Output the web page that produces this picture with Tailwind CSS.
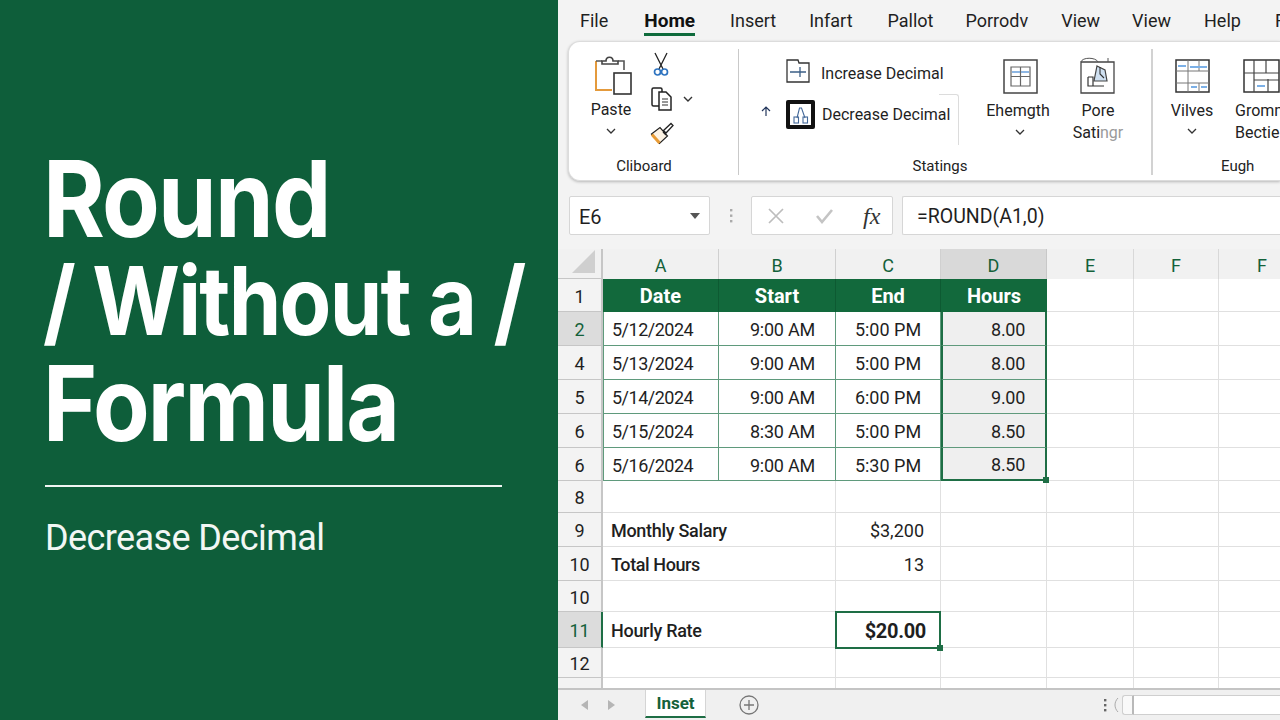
<!DOCTYPE html>
<html>
<head>
<meta charset="utf-8">
<script src="https://cdn.jsdelivr.net/npm/@tailwindcss/browser@4"></script>
</head>
<body class="m-0">
<div class="flex w-[1280px] h-[720px] overflow-hidden font-['Roboto',sans-serif]">
  <!-- left panel -->
  <div class="w-[558px] h-full shrink-0 bg-[#0e5e3a] text-white pl-[45px] pt-[148px]">
    <h1 class="-ml-[2px] font-['Inter',sans-serif] font-bold leading-[102px] tracking-[-2px] whitespace-nowrap origin-left scale-x-[0.89]">
      <span class="block text-[106px]">Round</span>
      <span class="block text-[95px]">/ Without a /</span>
      <span class="block text-[104px]">Formula</span>
    </h1>
    <div class="w-[457px] h-[2px] bg-[#f0f5f2] mt-[31px]"></div>
    <div class="mt-[29px] text-[36px] leading-[44px] tracking-[-0.6px] text-[#f2f7f4]">Decrease Decimal</div>
  </div>

  <!-- right panel -->
  <div class="flex-1 min-w-0 h-full bg-[#f3f3f3] flex flex-col text-[#1f1f1f]">
    <!-- tabs -->
    <div class="h-[41px] shrink-0 flex items-start pl-[22px] text-[18px] leading-[41px] whitespace-nowrap">
      <span>File</span>
      <span class="relative ml-[36px] font-bold text-[19px] text-[#111]">Home<span class="absolute left-0 right-0 top-[33px] h-[3px] bg-[#0f6b3c]"></span></span>
      <span class="ml-[35px]">Insert</span><span class="ml-[33px]">Infart</span><span class="ml-[35px]">Pallot</span><span class="ml-[32px]">Porrodv</span><span class="ml-[33px]">View</span><span class="ml-[32px]">View</span><span class="ml-[33px]">Help</span><span class="ml-[34px]">File</span>
    </div>

    <!-- ribbon -->
    <div class="ml-[10px] h-[140px] shrink-0 bg-white rounded-l-xl border border-r-0 border-[#dcdcdc] shadow-[0_1px_3px_rgba(0,0,0,0.25)] flex text-[16px] leading-[22px] whitespace-nowrap overflow-hidden">
      <!-- clipboard -->
      <div class="w-[169px] shrink-0 flex flex-col pt-[12px]">
        <div class="flex h-[105px]">
          <div class="w-[84px] flex flex-col items-center">
            <svg width="40" height="42" viewBox="0 0 40 42" fill="none" class="ml-[6px]">
              <path d="M2 7V36H18" stroke="#e49a3c" stroke-width="2"/>
              <path d="M2 7H8M24 7H30V16" stroke="#555" stroke-width="1.6"/>
              <path d="M8 10V7H12C12 2 19 2 19 7H24V10Z" fill="#fff" stroke="#444" stroke-width="1.6"/>
              <rect x="20" y="19" width="17" height="21" fill="#fff" stroke="#333" stroke-width="1.6"/>
            </svg>
            <span class="mt-[3px]">Paste</span>
            <svg width="10" height="7" viewBox="0 0 10 7" fill="none" class="mt-[7px]"><path d="M1 1L5 5L9 1" stroke="#333" stroke-width="1.3"/></svg>
          </div>
          <div class="flex flex-col items-start -ml-[3px]">
            <svg width="16" height="26" viewBox="0 0 16 26" fill="none" class="ml-[3px] -mt-[2px]">
              <path d="M2 1L10 17M14 1L6 17" stroke="#222" stroke-width="1.3"/>
              <circle cx="4.5" cy="20" r="3" stroke="#2f74c0" stroke-width="1.7"/>
              <circle cx="11.5" cy="20" r="3" stroke="#2f74c0" stroke-width="1.7"/>
            </svg>
            <div class="flex items-center mt-[9px] gap-[10px] ml-[1px]">
              <svg width="22" height="24" viewBox="0 0 22 24" fill="none">
                <rect x="1" y="1" width="10" height="18" rx="1.5" fill="#fff" stroke="#222" stroke-width="1.5"/>
                <path d="M8 5H15L20 10V23H8Z" fill="#fff" stroke="#222" stroke-width="1.5"/>
                <path d="M11 12H17M11 15H17M11 18H17" stroke="#333" stroke-width="1.2"/>
              </svg>
              <svg width="10" height="7" viewBox="0 0 10 7" fill="none"><path d="M1 1L5 5L9 1" stroke="#333" stroke-width="1.4"/></svg>
            </div>
            <svg width="24" height="24" viewBox="0 0 24 24" fill="none" class="mt-[11px]">
              <path d="M1.5 12L10 5.5L17.5 14L9.5 21.5Z" fill="#fdf3e4" stroke="#222" stroke-width="1.2"/>
              <path d="M2 12.5L9.5 21" stroke="#e89b35" stroke-width="3"/>
              <path d="M13 10L16 13" stroke="#222" stroke-width="1.2"/>
              <path d="M13.5 8.5L21 1.5L23 3.5L16 11Z" fill="#fff" stroke="#222" stroke-width="1.3"/>
            </svg>
          </div>
        </div>
        <div class="text-center text-[15px] -mt-[4px] text-[#222] pr-[19px]">Cliboard</div>
      </div>
      <div class="w-[1px] h-[126px] bg-[#c9c9c9] mt-[7px] shrink-0"></div>

      <!-- settings -->
      <div class="w-[412px] shrink-0 flex flex-col pt-[12px]">
        <div class="flex h-[105px]">
          <div class="w-[263px] shrink-0 relative pl-[21px]">
            <div class="flex items-center h-[34px] pl-[26px] gap-[11px]">
              <svg width="24" height="24" viewBox="0 0 24 24" fill="none">
                <path d="M1 1H12L13 4H23V23H1Z" fill="#fff" stroke="#333" stroke-width="1.3"/>
                <path d="M4 13H20M14 8V18" stroke="#3b5f86" stroke-width="1.3"/>
              </svg>
              <span class="mt-[6px]">Increase Decimal</span>
            </div>
            <div class="flex items-center h-[34px] mt-[9px]">
              <svg width="12" height="12" viewBox="0 0 12 12" fill="none" class="mb-[6px]"><path d="M6 11V2M2 6L6 2L10 6" stroke="#23365c" stroke-width="1.2"/></svg>
              <div class="w-[29px] h-[29px] ml-[14px] bg-[#111] rounded-[2px] p-[4px] flex">
                <svg width="21" height="21" viewBox="0 0 21 21" fill="none" class="bg-white">
                  <path d="M7 14L9.5 4H11.5L15 14" stroke="#44699a" stroke-width="1.1"/>
                  <rect x="4" y="13" width="4.5" height="6" stroke="#44699a" stroke-width="1.1"/>
                  <rect x="13" y="13" width="4.5" height="6" stroke="#44699a" stroke-width="1.1"/>
                </svg>
              </div>
              <span class="ml-[7px] mt-[2px]">Decrease Decimal</span>
            </div>
            <div class="absolute right-[43px] top-[40px] w-[20px] h-[51px] border-t border-r border-[#dcdcdc] rounded-tr-[3px]"></div>
          </div>
          <div class="w-[78px] shrink-0 flex flex-col items-center -ml-[21px]">
            <svg width="35" height="35" viewBox="0 0 35 35" fill="none" class="mt-[5px]">
              <rect x="1" y="1" width="33" height="33" stroke="#444" stroke-width="1.5"/>
              <path d="M8 8H27V27H8ZM8 17.5H27M17.5 8V27" stroke="#666" stroke-width="1.2"/>
              <path d="M9 13H17M18 13H26" stroke="#6aa0dc" stroke-width="1.4"/>
            </svg>
            <span class="mt-[6px] -ml-[4px] text-[#222]">Ehemgth</span>
            <svg width="10" height="7" viewBox="0 0 10 7" fill="none" class="mt-[7px]"><path d="M1 1L5 5L9 1" stroke="#333" stroke-width="1.3"/></svg>
          </div>
          <div class="w-[78px] shrink-0 flex flex-col items-center">
            <svg width="36" height="38" viewBox="0 0 36 38" fill="none" class="mt-[2px]">
              <path d="M1 6H34V37H1Z" stroke="#444" stroke-width="1.3"/>
              <path d="M1 6C2 1 16 1 18 6M28 2V6" stroke="#555" stroke-width="1"/>
              <path d="M8 21H13V30H24M8 21V30H13" stroke="#333" stroke-width="1.2"/>
              <path d="M17 10L25 14L27 25H14Z" fill="#cfe0f1" stroke="#444" stroke-width="1.2"/>
              <path d="M20 11V18L24 22" stroke="#333" stroke-width="1.1"/>
            </svg>
            <span class="mt-[6px] text-[#222]">Pore</span>
            <span class="text-[#222]">Sati<span class="text-[#9a9a9a]">ngr</span></span>
          </div>
        </div>
        <div class="text-center text-[15px] -mt-[4px] text-[#222] pr-[10px]">Statings</div>
      </div>
      <div class="w-[2px] h-[126px] bg-[#d2d2d2] mt-[7px] shrink-0"></div>

      <!-- eugh -->
      <div class="flex-1 min-w-0 flex flex-col pt-[12px]">
        <div class="flex h-[105px]">
          <div class="w-[78px] shrink-0 flex flex-col items-center">
            <svg width="35" height="34" viewBox="0 0 35 34" fill="none" class="mt-[5px]">
              <rect x="1" y="1" width="33" height="32" stroke="#333" stroke-width="1.5"/>
              <path d="M1 12H34M1 24H34M13 1V33M24 1V12M24 24V33" stroke="#777" stroke-width="1"/>
              <path d="M3 7H11M15 8H32M16 28H22M26 28H32" stroke="#7cb0e6" stroke-width="2"/>
            </svg>
            <span class="mt-[7px] text-[#222]">Vilves</span>
            <svg width="10" height="7" viewBox="0 0 10 7" fill="none" class="mt-[6px]"><path d="M1 1L5 5L9 1" stroke="#333" stroke-width="1.3"/></svg>
          </div>
          <div class="flex flex-col pl-[4px]">
            <svg width="37" height="34" viewBox="0 0 37 34" fill="none" class="mt-[5px] ml-[8px]">
              <rect x="1" y="1" width="35" height="32" stroke="#333" stroke-width="1.5"/>
              <path d="M1 14H36M11 1V14M23 1V14M11 14V33M25 20V33M11 21H36" stroke="#444" stroke-width="1.2"/>
              <path d="M14 27H22" stroke="#7cb0e6" stroke-width="2"/>
            </svg>
            <span class="mt-[7px] leading-[22px] text-[#222]">Gromn</span>
            <span class="text-[#222]">Bectie</span>
          </div>
        </div>
        <div class="text-[15px] -mt-[4px] text-[#222] pl-[68px]">Eugh</div>
      </div>
    </div>

    <!-- formula bar -->
    <div class="mt-[15px] h-[39px] shrink-0 pl-[11px] flex items-stretch text-[18px] whitespace-nowrap">
      <div class="w-[141px] bg-white border border-[#d6d6d6] rounded-[2px] flex items-center justify-between pl-[9px] pr-[9px]">
        <span class="text-[20px] pt-[2px]">E6</span>
        <svg width="10" height="6" viewBox="0 0 10 6"><path d="M0 0H10L5 6Z" fill="#555"/></svg>
      </div>
      <div class="w-[41px] flex items-center justify-center">
        <svg width="4" height="14" viewBox="0 0 4 14"><rect x="1" y="0" width="2.4" height="2.4" fill="#aaa"/><rect x="1" y="5.5" width="2.4" height="2.4" fill="#aaa"/><rect x="1" y="11" width="2.4" height="2.4" fill="#aaa"/></svg>
      </div>
      <div class="w-[142px] bg-white border border-[#d6d6d6] rounded-[2px] flex items-center pl-[16px]">
        <svg width="16" height="16" viewBox="0 0 16 16" fill="none"><path d="M1 1L15 15M15 1L1 15" stroke="#bdbdbd" stroke-width="1.7"/></svg>
        <svg width="20" height="16" viewBox="0 0 20 16" fill="none" class="ml-[31px]"><path d="M2 8L7 14L17 2" stroke="#c4c4c4" stroke-width="2.6"/></svg>
        <span class="ml-[28px] font-['Liberation_Serif',serif] italic text-[24px] text-[#333]">fx</span>
      </div>
      <div class="flex-1 ml-[9px] bg-white border border-r-0 border-[#d6d6d6] rounded-l-[2px] flex items-center pl-[14px] pt-[3px] text-[19.5px]">=ROUND(A1,0)</div>
    </div>

    <!-- sheet -->
    <div class="mt-[14px] flex-1 min-h-0 overflow-hidden bg-white text-[18px] whitespace-nowrap">
      <div class="grid w-[747px] grid-cols-[45px_116px_117px_105px_106px_87px_85px_86px] grid-rows-[30px_33px_34px_34px_34px_34px_33px_32px_34px_34px_31px_36px_30px_10px] [&>div]:flex [&>div]:items-center [&>div]:min-w-0 [&>div]:pt-[2px]">
        <!-- header row -->
        <div class="bg-[#f1f1f1] border-r-2 border-b border-[#c6c6c6] justify-end items-end! pr-[6px] pb-[5px]"><svg width="23" height="23" viewBox="0 0 23 23"><path d="M23 0V23H0Z" fill="#cfcfcf"/></svg></div>
        <div class="bg-[#f1f1f1] border-r border-[#d0d0d0] justify-center text-[#14613a]">A</div>
        <div class="bg-[#f1f1f1] border-r border-[#d0d0d0] justify-center text-[#14613a]">B</div>
        <div class="bg-[#f1f1f1] border-r border-[#d0d0d0] justify-center text-[#14613a]">C</div>
        <div class="bg-[#d9d9d9] border-r border-[#c8c8c8] justify-center text-[#14613a]">D</div>
        <div class="bg-[#f1f1f1] border-r border-[#d8d8d8] justify-center text-[#14613a]">E</div>
        <div class="bg-[#f1f1f1] border-r border-[#d8d8d8] justify-center text-[#14613a]">F</div>
        <div class="bg-[#f1f1f1] justify-center text-[#14613a]">F</div>

        <!-- row 1 -->
        <div class="bg-[#f3f3f3] border-r-2 border-b border-[#c6c6c6] justify-center">1</div>
        <div class="bg-[#12693c] border-r border-[#0d5a32] justify-center text-white font-bold text-[20px] pt-0!">Date</div>
        <div class="bg-[#12693c] border-r border-[#0d5a32] justify-center text-white font-bold text-[20px] pt-0!">Start</div>
        <div class="bg-[#12693c] border-r border-[#0d5a32] justify-center text-white font-bold text-[20px] pt-0!">End</div>
        <div class="bg-[#12693c] justify-center text-white font-bold text-[20px] pt-0!">Hours</div>
        <div class="border-r border-b border-[#e0e0e0]"></div><div class="border-r border-b border-[#e0e0e0]"></div><div class="border-b border-[#e0e0e0]"></div>

        <!-- row 2 -->
        <div class="bg-[#dcdcdc] border-r-2 border-b border-[#c6c6c6] justify-center text-[#14613a]">2</div>
        <div class="border-l border-r border-b border-[#5f9a7c] pl-[8px] tracking-[-0.5px]">5/12/2024</div>
        <div class="border-r border-b border-[#5f9a7c] justify-center pl-[11px] tracking-[-0.2px]">9:00 AM</div>
        <div class="border-r border-b border-[#5f9a7c] justify-center">5:00 PM</div>
        <div class="bg-[#efefef] border-x-2 border-x-[#1e6e45] border-b-[#5f9a7c] border-b justify-end pr-[20px] tracking-[-0.3px]">8.00</div>
        <div class="border-r border-b border-[#e0e0e0]"></div><div class="border-r border-b border-[#e0e0e0]"></div><div class="border-b border-[#e0e0e0]"></div>

        <!-- row 4 -->
        <div class="bg-[#f3f3f3] border-r-2 border-b border-[#c6c6c6] justify-center">4</div>
        <div class="border-l border-r border-b border-[#5f9a7c] pl-[8px] tracking-[-0.5px]">5/13/2024</div>
        <div class="border-r border-b border-[#5f9a7c] justify-center pl-[11px] tracking-[-0.2px]">9:00 AM</div>
        <div class="border-r border-b border-[#5f9a7c] justify-center">5:00 PM</div>
        <div class="bg-[#efefef] border-x-2 border-x-[#1e6e45] border-b-[#5f9a7c] border-b justify-end pr-[20px] tracking-[-0.3px]">8.00</div>
        <div class="border-r border-b border-[#e0e0e0]"></div><div class="border-r border-b border-[#e0e0e0]"></div><div class="border-b border-[#e0e0e0]"></div>

        <!-- row 5 -->
        <div class="bg-[#f3f3f3] border-r-2 border-b border-[#c6c6c6] justify-center">5</div>
        <div class="border-l border-r border-b border-[#5f9a7c] pl-[8px] tracking-[-0.5px]">5/14/2024</div>
        <div class="border-r border-b border-[#5f9a7c] justify-center pl-[11px] tracking-[-0.2px]">9:00 AM</div>
        <div class="border-r border-b border-[#5f9a7c] justify-center">6:00 PM</div>
        <div class="bg-[#efefef] border-x-2 border-x-[#1e6e45] border-b-[#5f9a7c] border-b justify-end pr-[20px] tracking-[-0.3px]">9.00</div>
        <div class="border-r border-b border-[#e0e0e0]"></div><div class="border-r border-b border-[#e0e0e0]"></div><div class="border-b border-[#e0e0e0]"></div>

        <!-- row 6 -->
        <div class="bg-[#f3f3f3] border-r-2 border-b border-[#c6c6c6] justify-center">6</div>
        <div class="border-l border-r border-b border-[#5f9a7c] pl-[8px] tracking-[-0.5px]">5/15/2024</div>
        <div class="border-r border-b border-[#5f9a7c] justify-center pl-[11px] tracking-[-0.2px]">8:30 AM</div>
        <div class="border-r border-b border-[#5f9a7c] justify-center">5:00 PM</div>
        <div class="bg-[#efefef] border-x-2 border-x-[#1e6e45] border-b-[#5f9a7c] border-b justify-end pr-[20px] tracking-[-0.3px]">8.50</div>
        <div class="border-r border-b border-[#e0e0e0]"></div><div class="border-r border-b border-[#e0e0e0]"></div><div class="border-b border-[#e0e0e0]"></div>

        <!-- row 6b -->
        <div class="bg-[#f3f3f3] border-r-2 border-b border-[#c6c6c6] justify-center">6</div>
        <div class="border-l border-r border-b border-[#5f9a7c] pl-[8px] tracking-[-0.5px]">5/16/2024</div>
        <div class="border-r border-b border-[#5f9a7c] justify-center pl-[11px] tracking-[-0.2px]">9:00 AM</div>
        <div class="border-r border-b border-[#5f9a7c] justify-center">5:30 PM</div>
        <div class="relative bg-[#efefef] border-x-2 border-b-2 border-[#1e6e45] justify-end pr-[20px] tracking-[-0.3px]">8.50<span class="absolute -right-[4px] -bottom-[4px] w-[6px] h-[6px] bg-[#1e6e45]"></span></div>
        <div class="border-r border-b border-[#e0e0e0]"></div><div class="border-r border-b border-[#e0e0e0]"></div><div class="border-b border-[#e0e0e0]"></div>

        <!-- row 8 -->
        <div class="bg-[#f3f3f3] border-r-2 border-b border-[#c6c6c6] justify-center">8</div>
        <div class="col-span-2 border-r border-b border-[#e0e0e0]"></div><div class="border-r border-b border-[#e0e0e0]"></div><div class="border-r border-b border-[#e0e0e0]"></div><div class="border-r border-b border-[#e0e0e0]"></div><div class="border-r border-b border-[#e0e0e0]"></div><div class="border-b border-[#e0e0e0]"></div>

        <!-- row 9 -->
        <div class="bg-[#f3f3f3] border-r-2 border-b border-[#c6c6c6] justify-center">9</div>
        <div class="col-span-2 border-r border-b border-[#e0e0e0] pl-[8px] font-medium tracking-[-0.3px]">Monthly Salary</div>
        <div class="border-r border-b border-[#e0e0e0] justify-end pr-[16px]">$3,200</div>
        <div class="border-r border-b border-[#e0e0e0]"></div><div class="border-r border-b border-[#e0e0e0]"></div><div class="border-r border-b border-[#e0e0e0]"></div><div class="border-b border-[#e0e0e0]"></div>

        <!-- row 10 -->
        <div class="bg-[#f3f3f3] border-r-2 border-b border-[#c6c6c6] justify-center">10</div>
        <div class="col-span-2 border-r border-b border-[#e0e0e0] pl-[8px] font-medium tracking-[-0.4px]">Total Hours</div>
        <div class="border-r border-b border-[#e0e0e0] justify-end pr-[16px]">13</div>
        <div class="border-r border-b border-[#e0e0e0]"></div><div class="border-r border-b border-[#e0e0e0]"></div><div class="border-r border-b border-[#e0e0e0]"></div><div class="border-b border-[#e0e0e0]"></div>

        <!-- row 10b -->
        <div class="bg-[#f3f3f3] border-r-2 border-b border-[#c6c6c6] justify-center">10</div>
        <div class="col-span-2 border-r border-b border-[#e0e0e0]"></div><div class="border-r border-b border-[#e0e0e0]"></div><div class="border-r border-b border-[#e0e0e0]"></div><div class="border-r border-b border-[#e0e0e0]"></div><div class="border-r border-b border-[#e0e0e0]"></div><div class="border-b border-[#e0e0e0]"></div>

        <!-- row 11 -->
        <div class="bg-[#dcdcdc] border-r-2 border-r-[#1e6e45] border-b border-b-[#c6c6c6] justify-center text-[#14613a]">11</div>
        <div class="col-span-2 border-r border-b border-[#e0e0e0] pl-[8px] font-medium tracking-[-0.3px]">Hourly Rate</div>
        <div class="relative -ml-[1px] -mt-[1px] -mb-[1px] border-2 border-[#1e6e45] justify-end pr-[13px] font-bold text-[20px] tracking-[-0.3px]">$20.00<span class="absolute -right-[4px] -bottom-[4px] w-[6px] h-[6px] bg-[#1e6e45]"></span></div>
        <div class="border-r border-b border-[#e0e0e0]"></div><div class="border-r border-b border-[#e0e0e0]"></div><div class="border-r border-b border-[#e0e0e0]"></div><div class="border-b border-[#e0e0e0]"></div>

        <!-- row 12 -->
        <div class="bg-[#f3f3f3] border-r-2 border-b border-[#c6c6c6] justify-center">12</div>
        <div class="col-span-2 border-r border-b border-[#e0e0e0]"></div><div class="border-r border-b border-[#e0e0e0]"></div><div class="border-r border-b border-[#e0e0e0]"></div><div class="border-r border-b border-[#e0e0e0]"></div><div class="border-r border-b border-[#e0e0e0]"></div><div class="border-b border-[#e0e0e0]"></div>

        <!-- partial -->
        <div class="bg-[#f3f3f3] border-r-2 border-[#c6c6c6]"></div>
        <div class="col-span-2 border-r border-[#e0e0e0]"></div><div class="border-r border-[#e0e0e0]"></div><div class="border-r border-[#e0e0e0]"></div><div class="border-r border-[#e0e0e0]"></div><div class="border-r border-[#e0e0e0]"></div><div></div>
      </div>
    </div>

    <!-- status bar -->
    <div class="h-[32px] shrink-0 bg-[#f0f0f0] border-t-2 border-[#c4c4c4] flex items-center whitespace-nowrap">
      <svg width="7" height="10" viewBox="0 0 7 10" class="ml-[23px]"><path d="M7 0V10L0 5Z" fill="#b5b5b5"/></svg>
      <svg width="7" height="10" viewBox="0 0 7 10" class="ml-[20px]"><path d="M0 0V10L7 5Z" fill="#b5b5b5"/></svg>
      <div class="ml-[30px] w-[61px] h-[28px] -mt-[2px] pt-[2px] bg-white border-x border-[#d5d5d5] border-b-2 border-b-[#1e6e45] flex items-center justify-center text-[#14613a] font-bold text-[17px]">Inset</div>
      <svg width="20" height="20" viewBox="0 0 20 20" fill="none" class="ml-[33px]"><circle cx="10" cy="10" r="9" stroke="#777" stroke-width="1.3"/><path d="M5 10H15M10 5V15" stroke="#777" stroke-width="1.3"/></svg>
      <svg width="3" height="13" viewBox="0 0 3 13" class="ml-[345px]"><rect width="2.4" height="2.4" fill="#666"/><rect y="5" width="2.4" height="2.4" fill="#666"/><rect y="10" width="2.4" height="2.4" fill="#666"/></svg>
      <svg width="6" height="16" viewBox="0 0 6 16" fill="none" class="ml-[6px]"><path d="M5 1C1 5 1 11 5 15" stroke="#aaa" stroke-width="1"/></svg>
      <div class="ml-[3px] flex-1 h-[20px] flex">
        <div class="w-[12px] bg-[#f9f9f9] border border-r-2 border-[#cfcfcf] border-r-[#b9b9b9] rounded-l-[3px]"></div>
        <div class="flex-1 bg-white border-y border-[#cfcfcf]"></div>
      </div>
    </div>
  </div>
</div>
</body>
</html>
